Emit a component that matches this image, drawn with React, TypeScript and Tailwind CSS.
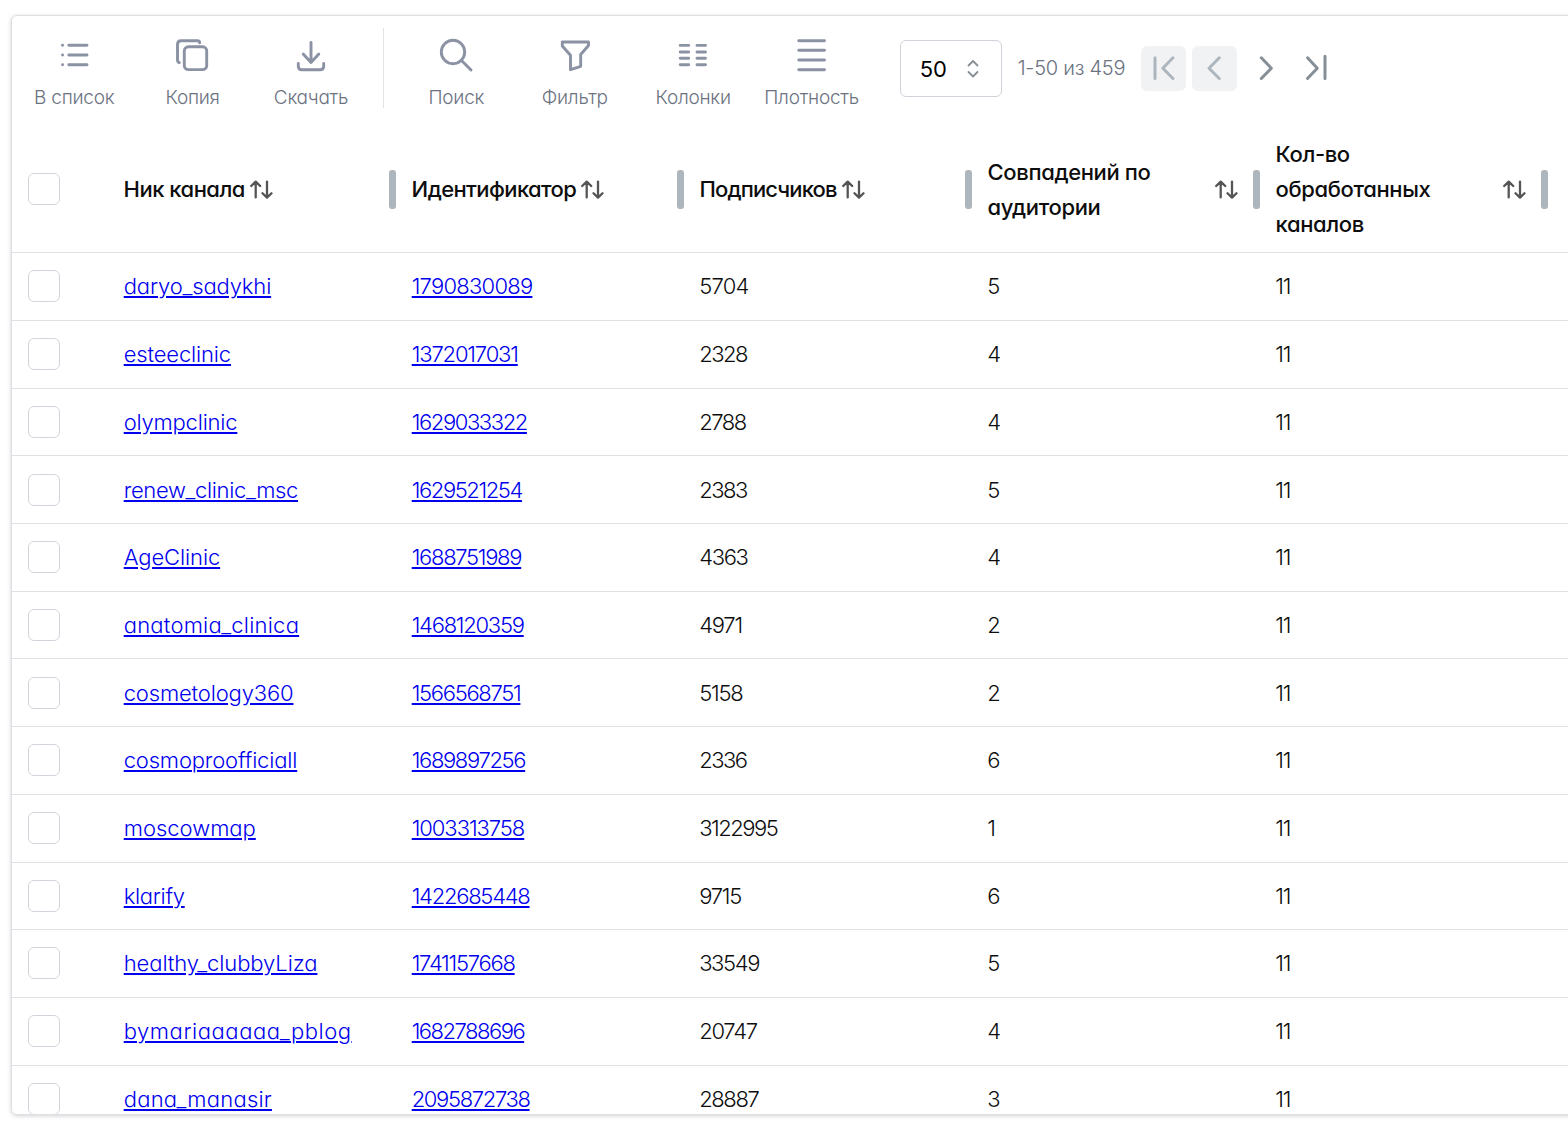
import type { ReactNode } from 'react';

interface Channel {
  name: string;
  nameClass: string;
  id: string;
  idClass: string;
  subscribers: string;
  subscribersClass: string;
  matches: number;
}

const channels: Channel[] = [
  { name: 'daryo_sadykhi', nameClass: 'tracking-[-0.15px]', id: '1790830089', idClass: 'tracking-[-0.75px]', subscribers: '5704', subscribersClass: 'tracking-[-0.75px]', matches: 5 },
  { name: 'esteeclinic', nameClass: 'tracking-[-0.15px]', id: '1372017031', idClass: 'tracking-[-1.15px]', subscribers: '2328', subscribersClass: 'tracking-[-1.5px]', matches: 4 },
  { name: 'olympclinic', nameClass: 'tracking-[-0.2px]', id: '1629033322', idClass: 'tracking-[-1.4px]', subscribers: '2788', subscribersClass: 'tracking-[-1.5px]', matches: 4 },
  { name: 'renew_clinic_msc', nameClass: 'tracking-[-0.34px]', id: '1629521254', idClass: 'tracking-[-1.4px]', subscribers: '2383', subscribersClass: 'tracking-[-1.5px]', matches: 5 },
  { name: 'AgeClinic', nameClass: 'tracking-[-0.1px]', id: '1688751989', idClass: 'tracking-[-1.3px]', subscribers: '4363', subscribersClass: 'tracking-[-1.35px]', matches: 4 },
  { name: 'anatomia_clinica', nameClass: 'tracking-[0.23px]', id: '1468120359', idClass: 'tracking-[-1.25px]', subscribers: '4971', subscribersClass: 'tracking-[-1.25px]', matches: 2 },
  { name: 'cosmetology360', nameClass: 'tracking-[-0.15px]', id: '1566568751', idClass: 'tracking-[-1.3px]', subscribers: '5158', subscribersClass: 'tracking-[-1.25px]', matches: 2 },
  { name: 'cosmoproofficiall', nameClass: 'tracking-[-0.17px]', id: '1689897256', idClass: 'tracking-[-1.35px]', subscribers: '2336', subscribersClass: 'tracking-[-1.5px]', matches: 6 },
  { name: 'moscowmap', nameClass: 'tracking-normal', id: '1003313758', idClass: 'tracking-[-1.05px]', subscribers: '3122995', subscribersClass: 'tracking-[-1.5px]', matches: 1 },
  { name: 'klarify', nameClass: 'tracking-[-0.3px]', id: '1422685448', idClass: 'tracking-[-1.25px]', subscribers: '9715', subscribersClass: 'tracking-[-1.25px]', matches: 6 },
  { name: 'healthy_clubbyLiza', nameClass: 'tracking-[-0.08px]', id: '1741157668', idClass: 'tracking-[-1.25px]', subscribers: '33549', subscribersClass: 'tracking-[-1.4px]', matches: 5 },
  { name: 'bymariaaaaaa_pblog', nameClass: 'tracking-[0.55px]', id: '1682788696', idClass: 'tracking-[-1.5px]', subscribers: '20747', subscribersClass: 'tracking-[-1.25px]', matches: 4 },
  { name: 'dana_manasir', nameClass: 'tracking-[0.23px]', id: '2095872738', idClass: 'tracking-[-1.35px]', subscribers: '28887', subscribersClass: 'tracking-[-1.4px]', matches: 3 },
];

const linkClass = 'text-[#0000ee] underline decoration-2 underline-offset-2';

function ToolButton({ label, children }: { label: string; children: ReactNode }) {
  return (
    <button className="flex w-[118.4px] shrink-0 flex-col items-center">
      <svg
        className="h-10 w-10 text-[#8b92a3]"
        viewBox="0 0 40 40"
        fill="none"
        stroke="currentColor"
        strokeWidth="2.9"
        strokeLinecap="round"
        strokeLinejoin="round"
      >
        {children}
      </svg>
      <span className="mt-[9px] whitespace-nowrap text-[19px] leading-7 tracking-[-0.25px] text-[#6b7280]">
        {label}
      </span>
    </button>
  );
}

function PageButton({ d, disabled = false }: { d: string; disabled?: boolean }) {
  return (
    <button
      disabled={disabled}
      className={
        disabled
          ? 'h-[45px] w-[45px] rounded-md bg-[#f1f2f4] text-[#adb5bd]'
          : 'h-[45px] w-[45px] rounded-md text-[#868e96]'
      }
    >
      <svg
        className="h-[45px] w-[45px]"
        viewBox="0 0 45 45"
        fill="none"
        stroke="currentColor"
        strokeWidth="3"
        strokeLinecap="round"
        strokeLinejoin="round"
      >
        <path d={d} />
      </svg>
    </button>
  );
}

function Checkbox() {
  return <span className="block h-8 w-8 rounded-md border border-[#d1d5db] bg-white" />;
}

function SortIcon() {
  return (
    <svg
      className="h-5 w-6 shrink-0 text-[#555555]"
      viewBox="0 0 24 20"
      fill="none"
      stroke="currentColor"
      strokeWidth="2.3"
      strokeLinecap="round"
      strokeLinejoin="round"
    >
      <path d="M5.7 17.400V1.800M1.200 6L5.700 1.600L10.200 6M17 1.600V17.400M12.500 13.200L17 17.600L21.500 13.200" />
    </svg>
  );
}

function HeaderCell({ children, wide = false }: { children: ReactNode; wide?: boolean }) {
  return (
    <div className="flex w-72 shrink-0 items-center pl-[15.6px]">
      <div className={wide ? 'flex flex-1 items-center justify-between' : 'flex flex-1 items-center gap-[5px]'}>
        <span className="whitespace-nowrap">{children}</span>
        <SortIcon />
      </div>
      <span className="ml-[14px] h-[39px] w-[7px] rounded-[3px] bg-[#adb5bd]" />
    </div>
  );
}

export default function App() {
  return (
    <div className="h-[1130px] w-full overflow-hidden bg-white pl-[11px] pt-[15px] font-['Inter',sans-serif] text-[22px] text-[#0d0d0d] [font-feature-settings:'cv11']">
      <div className="h-[1100px] w-[1600px] overflow-hidden rounded-md border border-[#dcdfe4] shadow-[0_1px_4px_rgba(0,0,0,0.18)]">
        {/* Toolbar */}
        <div className="flex h-[111px] pl-[3px] font-light">
          <div className="flex pt-[19px]">
            <ToolButton label="В список">
              <path d="M8.5 10.3h.1M8.5 20h.1M8.5 29.7h.1M14.8 10.3H33M14.8 20H33M14.8 29.7H33" />
            </ToolButton>
            <ToolButton label="Копия">
              <rect x="11.300" y="11.800" width="22.400" height="22.800" rx="4.200" />
              <path d="M6.3 27.6Q4.500 27 4.500 25V9.500Q4.500 5.800 8.200 5.800H24.500Q26.500 5.800 26.700 7.800" />
            </ToolButton>
            <ToolButton label="Скачать">
              <path d="M20 7.5V27M12.2 19l7.8 8.5 7.8-8.5M7.3 28.5v2.7q0 3.5 3.5 3.5h18.4q3.5 0 3.5-3.5v-2.7" />
            </ToolButton>
          </div>
          <div className="ml-[13px] mr-[13px] mt-3 h-20 w-px bg-[#e2e4e8]" />
          <div className="flex pt-[19px]">
            <ToolButton label="Поиск">
              <circle cx="17" cy="17" r="11.7" />
              <path d="M25.5 25.5L35 35" />
            </ToolButton>
            <ToolButton label="Фильтр">
              <path d="M7.3 7H33.5V10.5L25.7 19.5V31.3L15.5 34.7V20.3L7.3 11Z" />
            </ToolButton>
            <ToolButton label="Колонки">
              <path d="M7.2 10.4h8.500M24 10.4h8.500M7.2 17h8.500M24 17h8.500M7.2 23.3h8.500M24 23.3h8.500M7.2 29.7h8.500M24 29.7h8.500" />
            </ToolButton>
            <ToolButton label="Плотность">
              <path d="M6.700 5.7H32.500M6.700 15.3H32.500M6.700 25H32.500M6.700 34.7H32.500" />
            </ToolButton>
          </div>
          <div className="ml-[29px] mt-6 flex h-[57px] w-[102px] shrink-0 items-center justify-between rounded-md border border-[#ced4da] pl-[19px] pr-[22px] font-normal text-black">
            <span className="pt-[2px]">50</span>
            <svg className="h-5 w-3" viewBox="0 0 12 20" fill="none" stroke="#868e96" strokeWidth="1.8" strokeLinecap="round" strokeLinejoin="round">
              <path d="M1.5 6.5L6 2l4.500 4.500M1.500 13L6 17.500l4.500-4.500" />
            </svg>
          </div>
          <span className="ml-4 mt-[38px] w-[123px] shrink-0 whitespace-nowrap text-[20px] leading-7 tracking-[-0.25px] text-[#6b7280]">
            1-50 из 459
          </span>
          <div className="mt-[30px] flex gap-[6px]">
            <PageButton disabled d="M14 11.800V32.500M32 11.800L21.800 22.200L32 32.500" />
            <PageButton disabled d="M27.300 11.800L17 22.200L27.300 32.500" />
            <PageButton d="M18.300 11.800L28.300 22.200L18.300 32.500" />
            <PageButton d="M13.500 11.800L23.300 22.200L13.500 32.500M31 10.300V32.500" />
          </div>
        </div>

        {/* Column headers */}
        <div className="flex h-[126.25px] border-b border-[#dfe1e5] font-medium leading-[35px]">
          <div className="flex w-24 shrink-0 items-center pb-[2px] pl-4">
            <Checkbox />
          </div>
          <HeaderCell>
            <span className="tracking-[-0.5px]">Ник канала</span>
          </HeaderCell>
          <HeaderCell>
            <span className="tracking-[-0.6px]">Идентификатор</span>
          </HeaderCell>
          <HeaderCell>
            <span className="tracking-[-0.88px]">Подписчиков</span>
          </HeaderCell>
          <HeaderCell wide>
            <span className="tracking-[-0.37px]">
              Совпадений по
              <br />
              аудитории
            </span>
          </HeaderCell>
          <HeaderCell wide>
            <span className="tracking-[-0.37px]">
              Кол-во
              <br />
              обработанных
              <br />
              каналов
            </span>
          </HeaderCell>
        </div>

        {channels.map((channel) => (
          <div key={channel.id} className="flex h-[67.71px] items-center border-b border-[#dfe1e5] font-light">
            <div className="w-24 shrink-0 pb-[0.37px] pl-4">
              <Checkbox />
            </div>
            <div className="w-72 shrink-0 pl-[15.7px] pt-[0.6px]">
              <a className={`${linkClass} ${channel.nameClass}`}>{channel.name}</a>
            </div>
            <div className="w-72 shrink-0 pl-[15.7px] pt-[0.6px]">
              <a className={`${linkClass} ${channel.idClass}`}>{channel.id}</a>
            </div>
            <div className="w-72 shrink-0 pl-[15.2px] pt-[0.6px]">
              <span className={channel.subscribersClass}>{channel.subscribers}</span>
            </div>
            <div className="w-72 shrink-0 pl-[15.2px] pt-[0.6px]">{channel.matches}</div>
            <div className="w-72 shrink-0 pl-[15.2px] pt-[0.6px] tracking-[-1px]">11</div>
          </div>
        ))}
      </div>
    </div>
  );
}
